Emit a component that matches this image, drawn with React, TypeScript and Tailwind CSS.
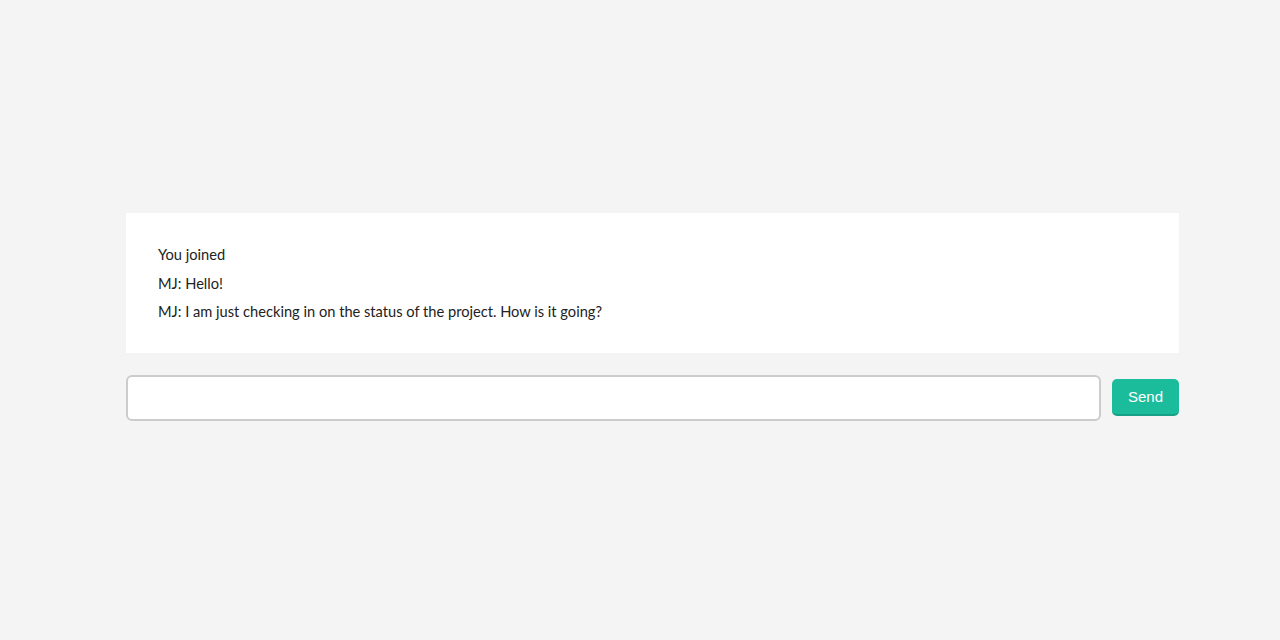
export default function App() {
  const messages = [
    "You joined",
    "MJ: Hello!",
    "MJ: I am just checking in on the status of the project. How is it going?",
  ];

  return (
    <div className="min-h-[640px] w-full bg-[#f4f4f4] pt-[213px]">
      <div className="ml-[126px] w-[1053px]">
        {/* Message log */}
        <div className="bg-white px-[32px] pt-[28px] pb-[26px] font-['Lato',sans-serif] text-[14.65px] text-[#222]">
          {messages.map((m, i) => (
            <div key={i} className="leading-[28.5px]">
              {m}
            </div>
          ))}
        </div>

        {/* Composer */}
        <div className="mt-[22px] flex items-center gap-[11px]">
          <input
            type="text"
            className="h-[46px] flex-1 rounded-[6px] border-2 border-[#cccccc] bg-white px-3 font-['Lato',sans-serif] text-[15px] outline-none"
          />
          <button className="h-[37px] w-[67px] rounded-[5px] border-b-2 border-[#16a085] bg-[#1abc9c] pt-[1px] font-['Liberation_Sans',Arial,sans-serif] text-[15px] text-white">
            Send
          </button>
        </div>
      </div>
    </div>
  );
}
